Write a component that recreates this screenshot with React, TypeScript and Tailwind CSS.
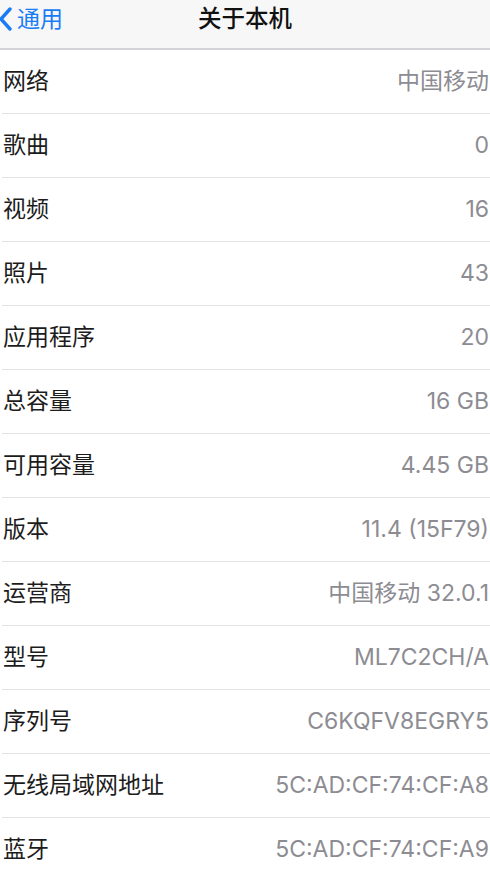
const rows: [string, string][] = [
  ["网络", "中国移动"],
  ["歌曲", "0"],
  ["视频", "16"],
  ["照片", "43"],
  ["应用程序", "20"],
  ["总容量", "16 GB"],
  ["可用容量", "4.45 GB"],
  ["版本", "11.4 (15F79)"],
  ["运营商", "中国移动 32.0.1"],
  ["型号", "ML7C2CH/A"],
  ["序列号", "C6KQFV8EGRY5"],
  ["无线局域网地址", "5C:AD:CF:74:CF:A8"],
  ["蓝牙", "5C:AD:CF:74:CF:A9"],
];

export default function App() {
  return (
    <div
      className="h-[870px] w-[490px] overflow-hidden bg-white"
      style={{ fontFamily: 'Inter, "Noto Sans CJK SC", sans-serif' }}
    >
      <div className="relative h-[50px] border-b-2 border-[#d4d3d8] bg-[#f7f7f8]">
        <div className="absolute left-0 top-[6px] flex items-center gap-[5px] text-[#1a7cf5]">
          <svg width="12" height="24" viewBox="0 0 12 24" fill="none">
            <polyline points="10,2 1,12 10,22" stroke="#1a7cf5" strokeWidth="3.4" strokeLinecap="round" strokeLinejoin="round" />
          </svg>
          <span className="text-[23px] leading-[26px]">通用</span>
        </div>
        <div className="pt-[6px] text-center text-[23.5px] font-medium leading-[26px] text-[#111]">关于本机</div>
      </div>
      <div>
        {rows.map(([label, value]) => (
          <div key={label} className="ml-[2px] flex h-[64px] items-center justify-between border-b border-[#e3e1e6] pl-[1px] pr-[1px]">
            <span className="text-[23px] text-[#1c1c1c]">{label}</span>
            <span className="whitespace-nowrap text-[23px] text-[#8d8c92]">{value}</span>
          </div>
        ))}
      </div>
    </div>
  );
}
